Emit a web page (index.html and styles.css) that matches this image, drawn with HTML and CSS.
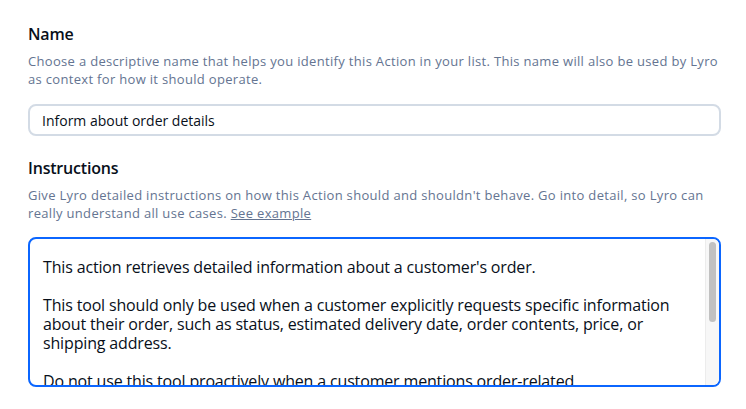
FILE: index.html
```html
<!DOCTYPE html>
<html lang="en">
<head>
  <meta charset="UTF-8">
  <meta name="viewport" content="width=device-width, initial-scale=1.0">
  <title>Edit Action</title>
  <link rel="stylesheet" href="styles.css">
</head>
<body>
  <div class="action-form">
    <div class="field">
      <label class="field-label" for="action-name">Name</label>
      <p class="field-hint">Choose a descriptive name that helps you identify this Action in your list. This name will also be used by Lyro as context for how it should operate.</p>
      <input type="text" id="action-name" class="text-input" value="Inform about order details">
    </div>
    <div class="field">
      <label class="field-label">Instructions</label>
      <p class="field-hint">Give Lyro detailed instructions on how this Action should and shouldn't behave. Go into detail, so Lyro can really understand all use cases. <a href="#" class="hint-link">See example</a></p>
      <div class="text-area">
        <div class="text-area-content">This action retrieves detailed information about a customer's order.

This tool should only be used when a customer explicitly requests specific information about their order, such as status, estimated delivery date, order contents, price, or shipping address.

Do not use this tool proactively when a customer mentions order-related inconveniences, complaints or general questions without asking for specific details.

If the order cannot be found, apologize and ask the customer to double-check the details they provided.</div>
        <div class="scroll-track">
          <div class="scroll-thumb"></div>
        </div>
      </div>
    </div>
  </div>
</body>
</html>
```

FILE: styles.css
```css
body {
  font-family: "Open Sans", sans-serif;
  background-color: #fff;
  color: #080f1a;
  margin: 0;
  padding: 22px 25px 0 28px;
}
.field {
  display: flex;
  flex-direction: column;
  margin-bottom: 20px;
}
.field-label {
  font-size: 16px;
  font-weight: 600;
  line-height: 24px;
  letter-spacing: -0.2px;
}
.field-hint {
  margin: 6px 0 16px;
  font-size: 13px;
  line-height: 18px;
  letter-spacing: 0.32px;
  color: #647491;
}
.hint-link {
  color: #647491;
  text-decoration: underline;
}
.text-input {
  box-sizing: border-box;
  height: 32px;
  padding: 0 12px;
  border: 2px solid #d3dbe5;
  border-radius: 8px;
  font-family: inherit;
  font-size: 14px;
  color: #080f1a;
  outline: none;
}
.text-area {
  display: flex;
  box-sizing: border-box;
  height: 150px;
  margin-top: -1px;
  border: 2px solid #0b66ff;
  border-radius: 8px;
  overflow: hidden;
}
.text-area-content {
  flex: 1;
  padding: 19px 14px 0 13px;
  font-size: 16px;
  line-height: 19px;
  letter-spacing: -0.16px;
  white-space: pre-wrap;
  overflow: hidden;
}
.scroll-track {
  width: 14px;
  flex-shrink: 0;
  box-sizing: border-box;
  padding: 3px 3px 0 3px;
  background-color: #f7f7f7;
  border-left: 1px solid #ececec;
}
.scroll-thumb {
  height: 80px;
  border-radius: 4px;
  background-color: #c1c1c1;
}
```
